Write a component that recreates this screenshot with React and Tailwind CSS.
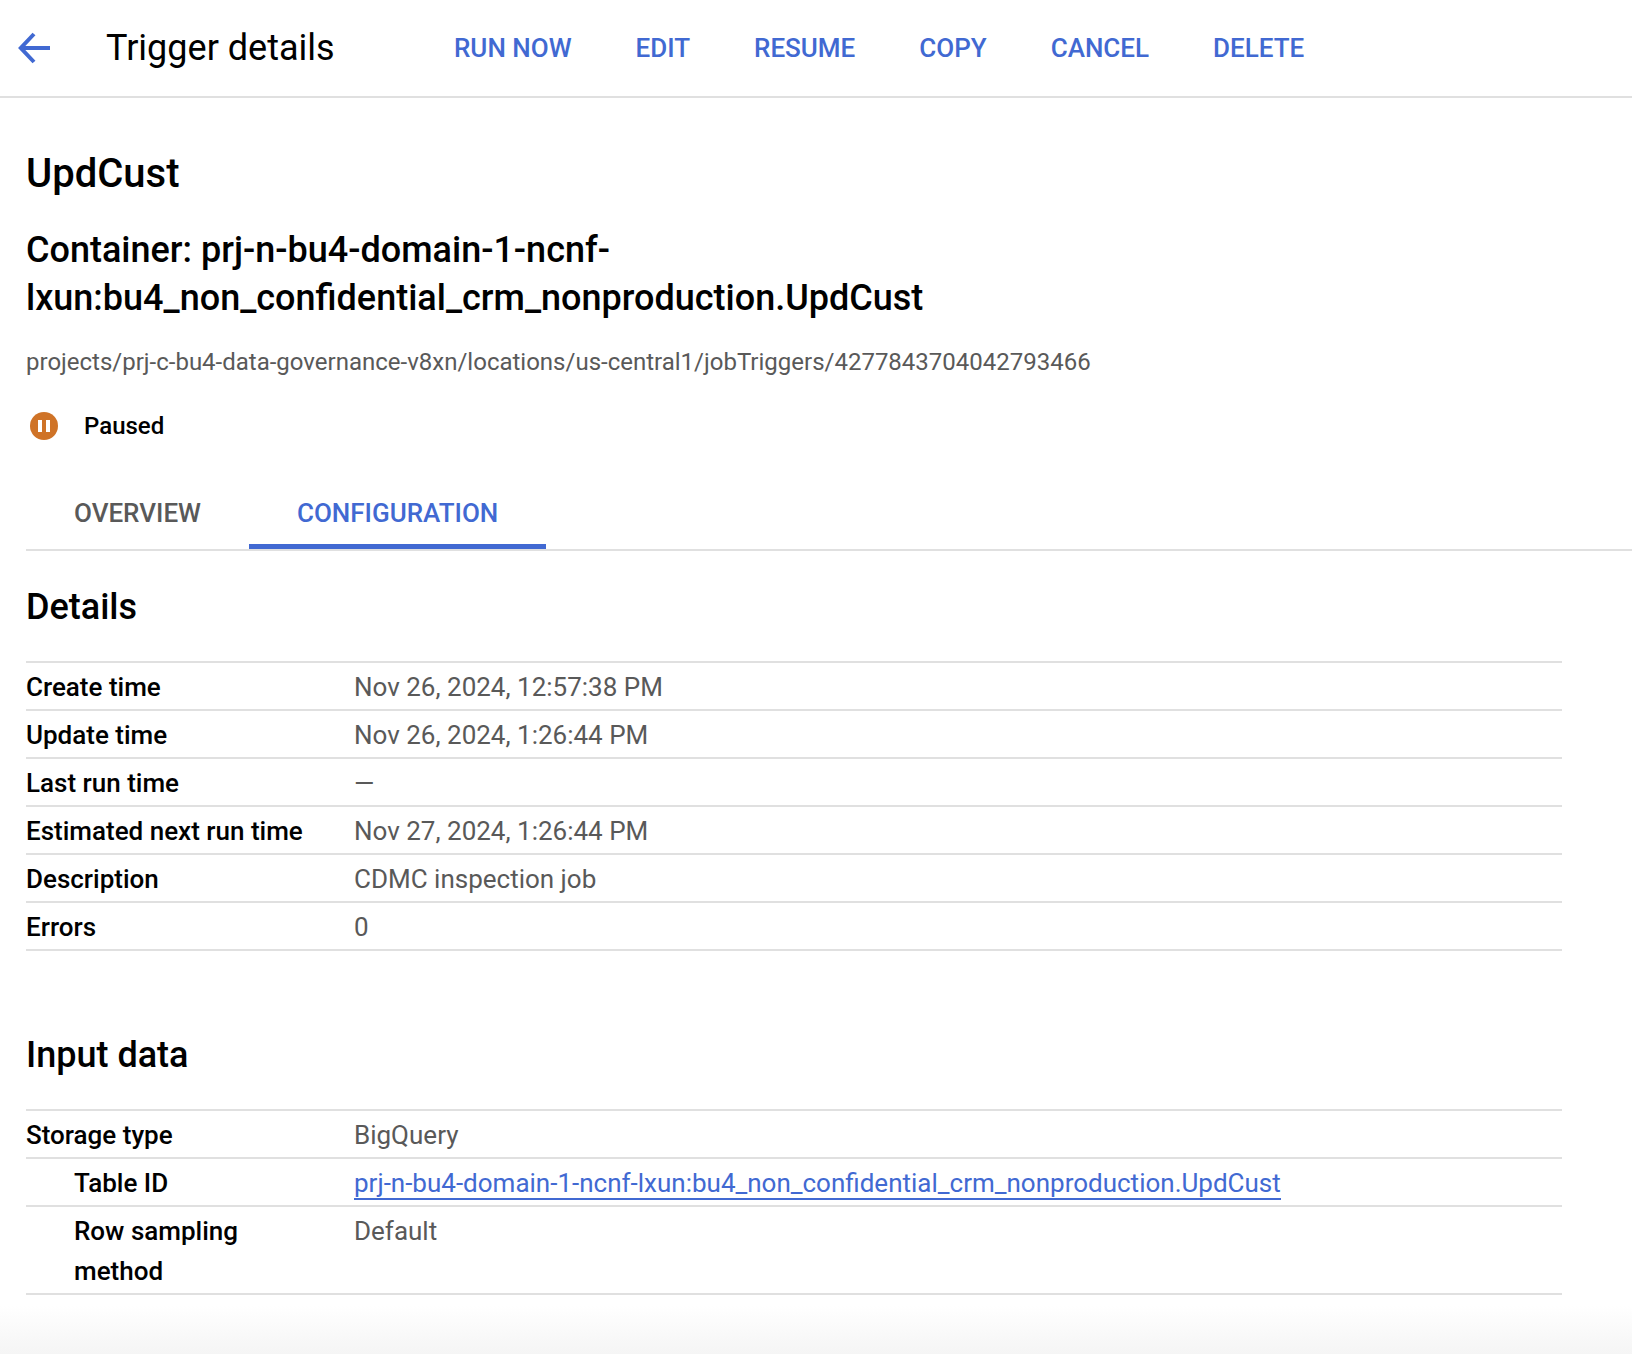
const actions = ["RUN NOW", "EDIT", "RESUME", "COPY", "CANCEL", "DELETE"];

const details = [
  ["Create time", "Nov 26, 2024, 12:57:38 PM"],
  ["Update time", "Nov 26, 2024, 1:26:44 PM"],
  ["Last run time", "—"],
  ["Estimated next run time", "Nov 27, 2024, 1:26:44 PM"],
  ["Description", "CDMC inspection job"],
  ["Errors", "0"],
];

function Row({ label, indent, children }) {
  return (
    <div className="flex border-b-2 border-[#e0e0e0] pt-[4px] pb-[2px] leading-[40px]">
      <div className={`w-[328px] shrink-0 font-medium text-black pr-10 ${indent ? "pl-12" : ""}`}>{label}</div>
      <div className="text-[#595959]">{children}</div>
    </div>
  );
}

export default function App() {
  return (
    <div className="relative h-[1354px] overflow-hidden bg-white text-[26px] font-['Roboto',sans-serif]">
      <header className="flex h-[98px] items-center border-b-2 border-[#e0e0e0]">
        <svg className="ml-[18px] h-[32px] w-[32px] text-[#4169d2]" viewBox="0 0 32 32" fill="none" stroke="currentColor" strokeWidth="4">
          <path d="M32 16H3" />
          <path d="M16 2 2.8 16 16 30" />
        </svg>
        <h1 className="ml-[56px] w-[348px] text-[36px] text-black">Trigger details</h1>
        <nav className="flex gap-[64px] font-medium text-[#4169d2]">
          {actions.map((a) => (
            <span key={a}>{a}</span>
          ))}
        </nav>
      </header>

      <main className="pl-[26px]">
        <h2 className="mt-[52px] text-[40px] leading-[48px] font-medium text-black">UpdCust</h2>
        <h3 className="mt-[28px] w-[1000px] text-[36px] leading-[48px] font-medium text-black">
          Container: prj-n-bu4-domain-1-ncnf-
          <br />
          lxun:bu4_non_confidential_crm_nonproduction.UpdCust
        </h3>
        <p className="mt-[20px] text-[24px] leading-[40px] text-[#595959]">
          projects/prj-c-bu4-data-governance-v8xn/locations/us-central1/jobTriggers/4277843704042793466
        </p>

        <div className="mt-[24px] flex items-center text-[24px] leading-[40px] font-medium text-black">
          <svg className="ml-[4px] h-[28px] w-[28px]" viewBox="0 0 28 28">
            <circle cx="14" cy="14" r="14" fill="#cf7327" />
            <rect x="8" y="8" width="4" height="12" fill="#fff" />
            <rect x="16" y="8" width="4" height="12" fill="#fff" />
          </svg>
          <span className="ml-[26px]">Paused</span>
        </div>

        <div className="mt-[32px] flex h-[73px] border-b-2 border-[#e0e0e0] font-medium">
          <div className="flex h-[71px] items-center border-b-[5px] border-transparent px-12 pt-[4px] text-[#595959]">OVERVIEW</div>
          <div className="flex h-[71px] items-center border-b-[5px] border-[#4169d2] px-12 pt-[4px] text-[#4169d2]">CONFIGURATION</div>
        </div>

        <div className="w-[1536px]">
          <h2 className="mt-[32px] mb-[30px] text-[36px] leading-[48px] font-medium text-black">Details</h2>
          <div className="border-t-2 border-[#e0e0e0]">
            {details.map(([label, value]) => (
              <Row key={label} label={label}>{value}</Row>
            ))}
          </div>

          <h2 className="mt-[80px] mb-[30px] text-[36px] leading-[48px] font-medium text-black">Input data</h2>
          <div className="border-t-2 border-[#e0e0e0]">
            <Row label="Storage type">BigQuery</Row>
            <Row label="Table ID" indent>
              <span className="border-b-2 border-[#4169d2] text-[#4169d2]">prj-n-bu4-domain-1-ncnf-lxun:bu4_non_confidential_crm_nonproduction.UpdCust</span>
            </Row>
            <Row label="Row sampling method" indent>Default</Row>
          </div>
        </div>
      </main>

      <div className="absolute right-0 bottom-0 left-0 h-[48px] bg-gradient-to-b from-white to-[#f5f5f5]" />
    </div>
  );
}
